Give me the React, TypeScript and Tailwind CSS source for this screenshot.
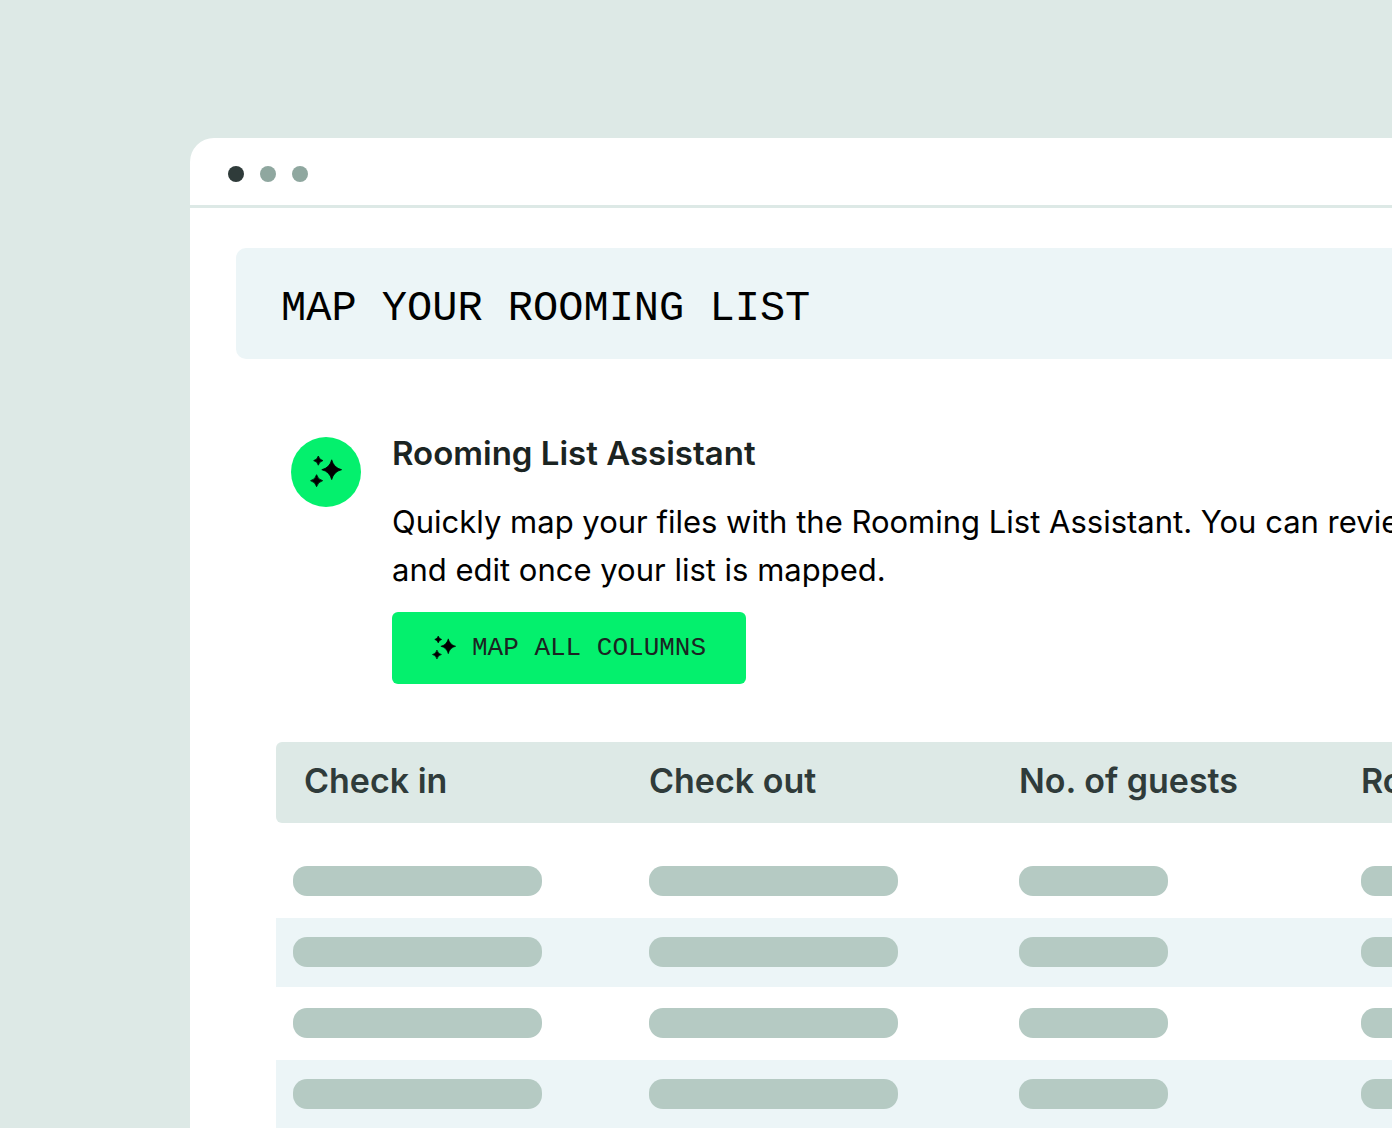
const star = (cx: number, cy: number, r: number) => {
  const k = r * 0.2;
  return `M${cx} ${cy - r}Q${cx + k} ${cy - k} ${cx + r} ${cy}Q${cx + k} ${cy + k} ${cx} ${cy + r}Q${cx - k} ${cy + k} ${cx - r} ${cy}Q${cx - k} ${cy - k} ${cx} ${cy - r}Z`;
};

function Sparkles({ className }: { className: string }) {
  return (
    <svg
      viewBox="0 0 32 32"
      className={className}
      fill="currentColor"
      stroke="currentColor"
      strokeWidth="0.8"
      strokeLinejoin="round"
      aria-hidden="true"
    >
      <path d={star(21.7, 13.7, 9.9)} />
      <path d={star(8.3, 4.6, 4.6)} />
      <path d={star(6.6, 24.7, 6)} />
    </svg>
  );
}

const columns = [
  { label: "Check in", bar: "w-[249px]", head: "pl-7" },
  { label: "Check out", bar: "w-[249px]", head: "pl-[17px]" },
  { label: "No. of guests", bar: "w-[149px]", head: "pl-[17px]" },
  { label: "Room type", bar: "w-[249px]", head: "pl-[17px]" },
];

const rows = [
  { id: 1, tint: "", cell: "pt-[43px] pb-[22px]" },
  { id: 2, tint: "bg-[#ecf5f7]", cell: "pt-[19px] pb-5" },
  { id: 3, tint: "", cell: "pt-[21px] pb-[22px]" },
  { id: 4, tint: "bg-[#ecf5f7]", cell: "pt-[19px] pb-5" },
];

export default function App() {
  return (
    <div className="h-screen overflow-hidden bg-[#dde9e6] pt-[138px] pl-[190px] font-['Inter','Liberation_Sans',sans-serif]">
      <div className="min-h-full rounded-tl-3xl bg-white">
        <div className="flex gap-4 border-b-3 border-[#dde9e6] pt-7 pb-[23px] pl-[38px]">
          <span className="size-4 rounded-full bg-[#2f3b3a]" />
          <span className="size-4 rounded-full bg-[#8fa79f]" />
          <span className="size-4 rounded-full bg-[#8fa79f]" />
        </div>

        <main className="pt-10">
          <header className="ml-[46px] rounded-l-[10px] bg-[#ecf5f7] pt-[34px] pb-[22px] pl-[45px]">
            <h1 className="font-['Liberation_Mono',monospace] text-[42px] leading-[55px] whitespace-nowrap text-black">
              MAP YOUR ROOMING LIST
            </h1>
          </header>

          <section className="mt-[78px] ml-[101px] flex items-start gap-[31px]">
            <div className="flex size-[70px] shrink-0 items-center justify-center rounded-full bg-[#04f06d] text-black">
              <Sparkles className="size-8" />
            </div>
            <div className="whitespace-nowrap">
              <h2 className="text-[33px] leading-8 font-semibold text-[#1b2422]">
                Rooming List Assistant
              </h2>
              <p className="mt-[29px] text-[31px] leading-12 text-black">
                Quickly map your files with the Rooming List Assistant. You can review
                <br />
                and edit once your list is mapped.
              </p>
              <button
                type="button"
                className="mt-[18px] flex h-18 items-center gap-4 rounded-md bg-[#04f06d] px-10 font-['Liberation_Mono',monospace] text-[26px] text-[#1b2422]"
              >
                <Sparkles className="size-6 text-black" />
                MAP ALL COLUMNS
              </button>
            </div>
          </section>

          <div className="mt-[58px] ml-[86px]">
            <table className="w-full table-fixed border-collapse text-left">
              <colgroup>
                <col className="w-[356px]" />
                <col className="w-[370px]" />
                <col className="w-[342px]" />
                <col />
              </colgroup>
              <thead>
                <tr>
                  {columns.map((c) => (
                    <th
                      key={c.label}
                      scope="col"
                      className={`${c.head} h-[81px] bg-[#dde9e6] pb-[3px] text-[34px] leading-10 font-semibold whitespace-nowrap text-[#2f3b3a] first:rounded-l-md`}
                    >
                      {c.label}
                    </th>
                  ))}
                </tr>
              </thead>
              <tbody>
                {rows.map((r) => (
                  <tr key={r.id} className={r.tint}>
                    {columns.map((c) => (
                      <td key={c.label} className={`${r.cell} pl-[17px]`}>
                        <div className={`${c.bar} h-[30px] rounded-[14px] bg-[#b5cac3]`} />
                      </td>
                    ))}
                  </tr>
                ))}
              </tbody>
            </table>
          </div>
        </main>
      </div>
    </div>
  );
}
